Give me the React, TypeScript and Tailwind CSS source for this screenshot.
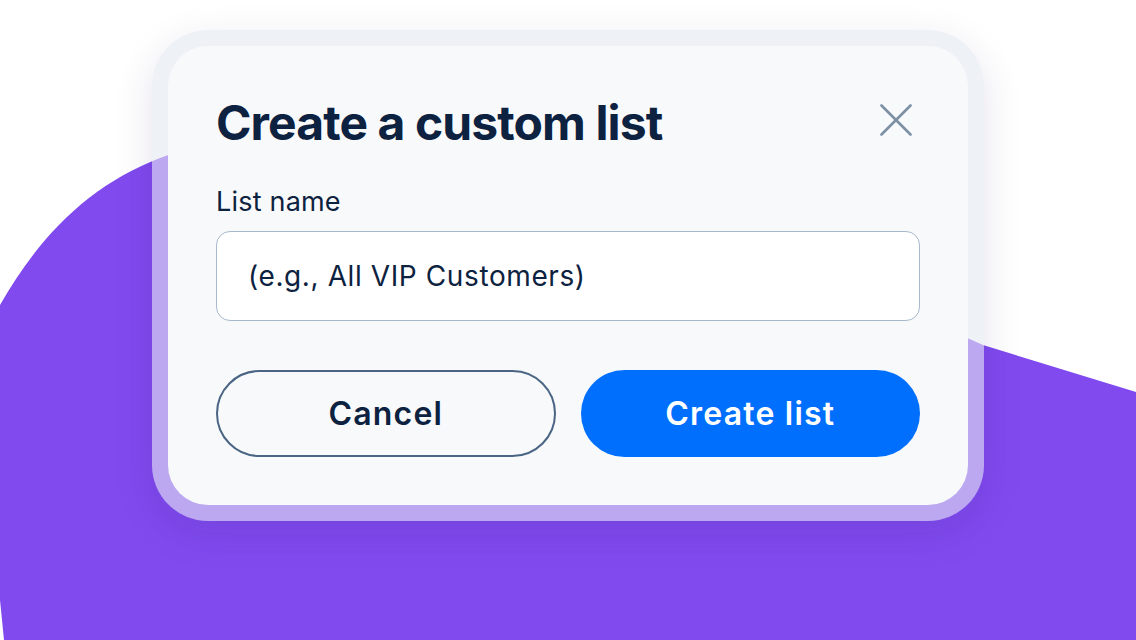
import React from "react";

export default function App() {
  return (
    <div className="relative w-[1136px] h-[640px] overflow-hidden bg-white" style={{ fontFamily: "Inter, 'Noto Sans', sans-serif" }}>
      <svg className="absolute inset-0" width="1136" height="640" viewBox="0 0 1136 640">
        <path
          d="M0 305 C 40 235 90 185 160 158 C 260 120 400 110 520 140 L 983 345 L 1136 392 L 1136 640 L 4 640 L 0 600 Z"
          fill="#804aef"
        />
      </svg>
      <div className="relative flex justify-center pt-[30px]">
        <div className="rounded-[56px] bg-[rgba(226,232,240,0.6)] p-[16px] shadow-[0_12px_40px_rgba(40,20,90,0.12)]">
          <div className="w-[800px] rounded-[40px] bg-[#f8f9fb] px-[48px] pt-[48px] pb-[48px]">
            <div className="flex items-center justify-between h-[58px]">
              <h1 className="text-[48px] leading-[58px] font-bold text-[#0d2240] tracking-[-0.9px]">Create a custom list</h1>
              <button className="mr-[8px] mb-[6px]" aria-label="Close">
                <svg width="32" height="32" viewBox="0 0 32 32" fill="none" stroke="#7d90a3" strokeWidth="2.6" strokeLinecap="round">
                  <path d="M1.5 1.5 L30.5 30.5 M30.5 1.5 L1.5 30.5" />
                </svg>
              </button>
            </div>
            <div className="mt-[34px] text-[27px] leading-[32px] tracking-[0.2px] text-[#0d2240]">List name</div>
            <div className="mt-[13px] h-[90px] rounded-[14px] border-[1.5px] border-[#a9b9cc] bg-white flex items-center px-[31px]">
              <span className="text-[28px] tracking-[0.6px] text-[#0d2240]">(e.g., All VIP Customers)</span>
            </div>
            <div className="mt-[49px] grid grid-cols-2 gap-[25px]">
              <button className="h-[87px] rounded-full border-2 border-[#4a6583] text-[32px] font-semibold tracking-[1.2px] text-[#0d2240]">Cancel</button>
              <button className="h-[87px] rounded-full bg-[#006ffd] text-[32px] font-semibold tracking-[1.2px] text-white">Create list</button>
            </div>
          </div>
        </div>
      </div>
    </div>
  );
}
